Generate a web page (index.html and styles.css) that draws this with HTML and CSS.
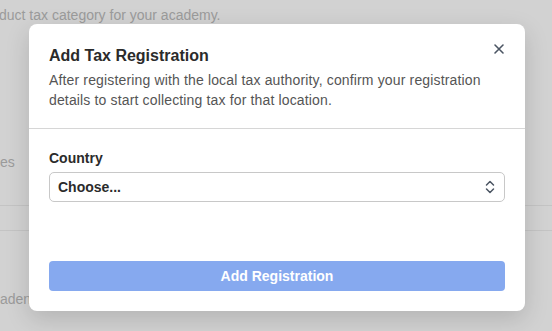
FILE: index.html
```html
<!DOCTYPE html>
<html lang="en">

<head>
  <meta charset="UTF-8">
  <title>Add Tax Registration</title>
  <link rel="stylesheet" href="styles.css">
</head>

<body>
  <!-- Page behind the modal -->
  <div class="page">
    <p class="page-text top">duct tax category for your academy.</p>
    <p class="page-text mid">es</p>
    <div class="page-rule first"></div>
    <div class="page-rule second"></div>
    <p class="page-text low">aden</p>
  </div>

  <!-- Modal -->
  <div class="overlay">
    <div class="modal">
      <div class="modal-header">
        <h2>Add Tax Registration</h2>
        <p>After registering with the local tax authority, confirm your registration details to start collecting tax for that location.</p>
        <button class="close-button" aria-label="Close">
          <svg width="12" height="12" viewBox="0 0 12 12">
            <path d="M2 2 L10 10 M10 2 L2 10" stroke="#4b5563" stroke-width="1.6" stroke-linecap="round" fill="none"/>
          </svg>
        </button>
      </div>
      <div class="modal-body">
        <label class="field-label">Country</label>
        <div class="select">
          <span>Choose...</span>
          <svg width="10" height="16" viewBox="0 0 10 16">
            <path d="M1.5 6 L5 2.5 L8.5 6 M1.5 10 L5 13.5 L8.5 10" stroke="#4b5563" stroke-width="1.5" stroke-linecap="round" stroke-linejoin="round" fill="none"/>
          </svg>
        </div>
        <button class="submit-button">Add Registration</button>
      </div>
    </div>
  </div>
</body>

</html>
```

FILE: styles.css
```css
body {
  margin: 0;
  font-family: "Liberation Sans", Arial, sans-serif;
  background: #d2d2d2;
  width: 552px;
  height: 331px;
  overflow: hidden;
  position: relative;
}

.page {
  height: 331px;
  position: relative;
}

.page-text {
  margin: 0;
  color: #9b9b9b;
  font-size: 14px;
  line-height: 20px;
  position: absolute;
  left: 0;
}

.page-text.top {
  top: 5px;
  left: -1px;
}

.page-text.mid {
  top: 152px;
}

.page-text.low {
  top: 289px;
}

.page-rule {
  position: absolute;
  left: 0;
  right: 0;
  height: 1px;
  background: #c4c4c4;
}

.page-rule.first {
  top: 205px;
}

.page-rule.second {
  top: 230px;
}

/* Modal */
.overlay {
  position: absolute;
  top: 0;
  left: 0;
  width: 100%;
  height: 100%;
}

.modal {
  position: absolute;
  top: 24px;
  left: 29px;
  width: 496px;
  height: 287px;
  background: #fff;
  border-radius: 8px;
  box-shadow: 0 8px 24px rgba(0, 0, 0, 0.15);
}

.modal-header {
  position: relative;
  padding: 21px 20px 18px;
  border-bottom: 1px solid #d6d6d6;
}

.modal-header h2 {
  margin: 0 0 3px;
  font-size: 16px;
  font-weight: 700;
  color: #2b2b2b;
  line-height: 22px;
}

.modal-header p {
  margin: 0;
  font-size: 14px;
  line-height: 20px;
  letter-spacing: 0.15px;
  color: #555;
}

.close-button {
  position: absolute;
  top: 19px;
  right: 20px;
  border: none;
  background: none;
  padding: 0;
  width: 12px;
  height: 12px;
  display: flex;
}

.modal-body {
  padding: 19px 20px;
  display: flex;
  flex-direction: column;
}

.field-label {
  font-size: 14px;
  font-weight: 700;
  color: #2b2b2b;
  line-height: 20px;
  margin-bottom: 4px;
}

.select {
  height: 28px;
  border: 1px solid #c8c8c8;
  border-radius: 5px;
  display: flex;
  align-items: center;
  justify-content: space-between;
  padding: 0 9px 0 8px;
  font-size: 14px;
  font-weight: 700;
  color: #2b2b2b;
}

.submit-button {
  margin-top: 59px;
  height: 30px;
  border: none;
  border-radius: 4px;
  background: #86a9ef;
  color: #fff;
  font-family: inherit;
  font-size: 14px;
  font-weight: 700;
}
```
